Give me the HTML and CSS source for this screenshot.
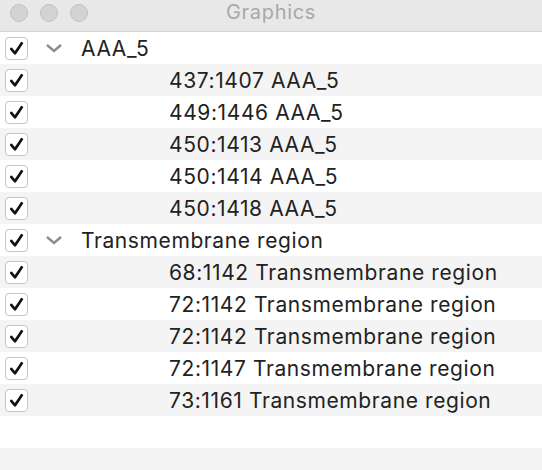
FILE: index.html
```html
<!DOCTYPE html>
<html lang="en">
<head>
    <meta charset="UTF-8">
    <title>Graphics</title>
    <link rel="stylesheet" href="styles.css">
</head>
<body>
    <div class="window">
        <!-- Title bar -->
        <div class="titlebar">
            <div class="lights">
                <span class="light"></span>
                <span class="light"></span>
                <span class="light"></span>
            </div>
            <div class="title">Graphics</div>
        </div>

        <!-- Outline list -->
        <div class="outline">
            <div class="row">
                <span class="check"><svg viewBox="0 0 22 22"><path d="M5.5 11.5 L9.5 16 L16.5 5.5" /></svg></span>
                <span class="chevron"><svg viewBox="0 0 18 10"><path d="M2 2 L9 8 L16 2" /></svg></span>
                <span class="label">AAA_5</span>
            </div>
            <div class="row child">
                <span class="check"><svg viewBox="0 0 22 22"><path d="M5.5 11.5 L9.5 16 L16.5 5.5" /></svg></span>
                <span class="label">437:1407 AAA_5</span>
            </div>
            <div class="row child">
                <span class="check"><svg viewBox="0 0 22 22"><path d="M5.5 11.5 L9.5 16 L16.5 5.5" /></svg></span>
                <span class="label">449:1446 AAA_5</span>
            </div>
            <div class="row child">
                <span class="check"><svg viewBox="0 0 22 22"><path d="M5.5 11.5 L9.5 16 L16.5 5.5" /></svg></span>
                <span class="label">450:1413 AAA_5</span>
            </div>
            <div class="row child">
                <span class="check"><svg viewBox="0 0 22 22"><path d="M5.5 11.5 L9.5 16 L16.5 5.5" /></svg></span>
                <span class="label">450:1414 AAA_5</span>
            </div>
            <div class="row child">
                <span class="check"><svg viewBox="0 0 22 22"><path d="M5.5 11.5 L9.5 16 L16.5 5.5" /></svg></span>
                <span class="label">450:1418 AAA_5</span>
            </div>
            <div class="row">
                <span class="check"><svg viewBox="0 0 22 22"><path d="M5.5 11.5 L9.5 16 L16.5 5.5" /></svg></span>
                <span class="chevron"><svg viewBox="0 0 18 10"><path d="M2 2 L9 8 L16 2" /></svg></span>
                <span class="label">Transmembrane region</span>
            </div>
            <div class="row child">
                <span class="check"><svg viewBox="0 0 22 22"><path d="M5.5 11.5 L9.5 16 L16.5 5.5" /></svg></span>
                <span class="label">68:1142 Transmembrane region</span>
            </div>
            <div class="row child">
                <span class="check"><svg viewBox="0 0 22 22"><path d="M5.5 11.5 L9.5 16 L16.5 5.5" /></svg></span>
                <span class="label">72:1142 Transmembrane region</span>
            </div>
            <div class="row child">
                <span class="check"><svg viewBox="0 0 22 22"><path d="M5.5 11.5 L9.5 16 L16.5 5.5" /></svg></span>
                <span class="label">72:1142 Transmembrane region</span>
            </div>
            <div class="row child">
                <span class="check"><svg viewBox="0 0 22 22"><path d="M5.5 11.5 L9.5 16 L16.5 5.5" /></svg></span>
                <span class="label">72:1147 Transmembrane region</span>
            </div>
            <div class="row child">
                <span class="check"><svg viewBox="0 0 22 22"><path d="M5.5 11.5 L9.5 16 L16.5 5.5" /></svg></span>
                <span class="label">73:1161 Transmembrane region</span>
            </div>
            <div class="row empty"></div>
            <div class="row empty"></div>
        </div>
    </div>
</body>
</html>
```

FILE: styles.css
```css
body {
    margin: 0;
    font-family: Inter, "Liberation Sans", sans-serif;
    background: #ffffff;
}
.window {
    width: 542px;
    height: 470px;
    overflow: hidden;
}
.titlebar {
    height: 32px;
    background: #e8e8e8;
    border-bottom: 1px solid #d4d4d4;
    box-sizing: border-box;
    display: flex;
    align-items: flex-start;
    position: relative;
}
.lights {
    display: flex;
    gap: 12px;
    padding-left: 10px;
    padding-top: 4px;
}
.light {
    width: 16px;
    height: 16px;
    border-radius: 50%;
    background: #d3d3d3;
    border: 1px solid #c2c2c2;
}
.title {
    position: absolute;
    left: 0;
    right: 0;
    top: 0;
    line-height: 25px;
    text-align: center;
    font-size: 20px;
    letter-spacing: 0.7px;
    color: #a9a9a9;
    pointer-events: none;
}
.row {
    height: 32px;
    display: flex;
    align-items: center;
}
.row:nth-child(even) {
    background: #f4f4f4;
}
.check {
    width: 21px;
    height: 21px;
    margin-left: 5px;
    border: 1px solid #c6c6c6;
    border-radius: 4px;
    background: #fff;
    display: flex;
}
.check svg {
    width: 21px;
    height: 21px;
}
.check path {
    fill: none;
    stroke: #111;
    stroke-width: 2.8;
    stroke-linecap: round;
    stroke-linejoin: round;
}
.chevron {
    width: 18px;
    height: 10px;
    margin-left: 17px;
    display: flex;
}
.chevron svg {
    width: 18px;
    height: 10px;
}
.chevron path {
    fill: none;
    stroke: #8a8a8a;
    stroke-width: 2.4;
}
.label {
    font-size: 21px;
    letter-spacing: 0.6px;
    color: #222;
    margin-left: 18px;
}
.child .label {
    margin-left: 141px;
}
```
